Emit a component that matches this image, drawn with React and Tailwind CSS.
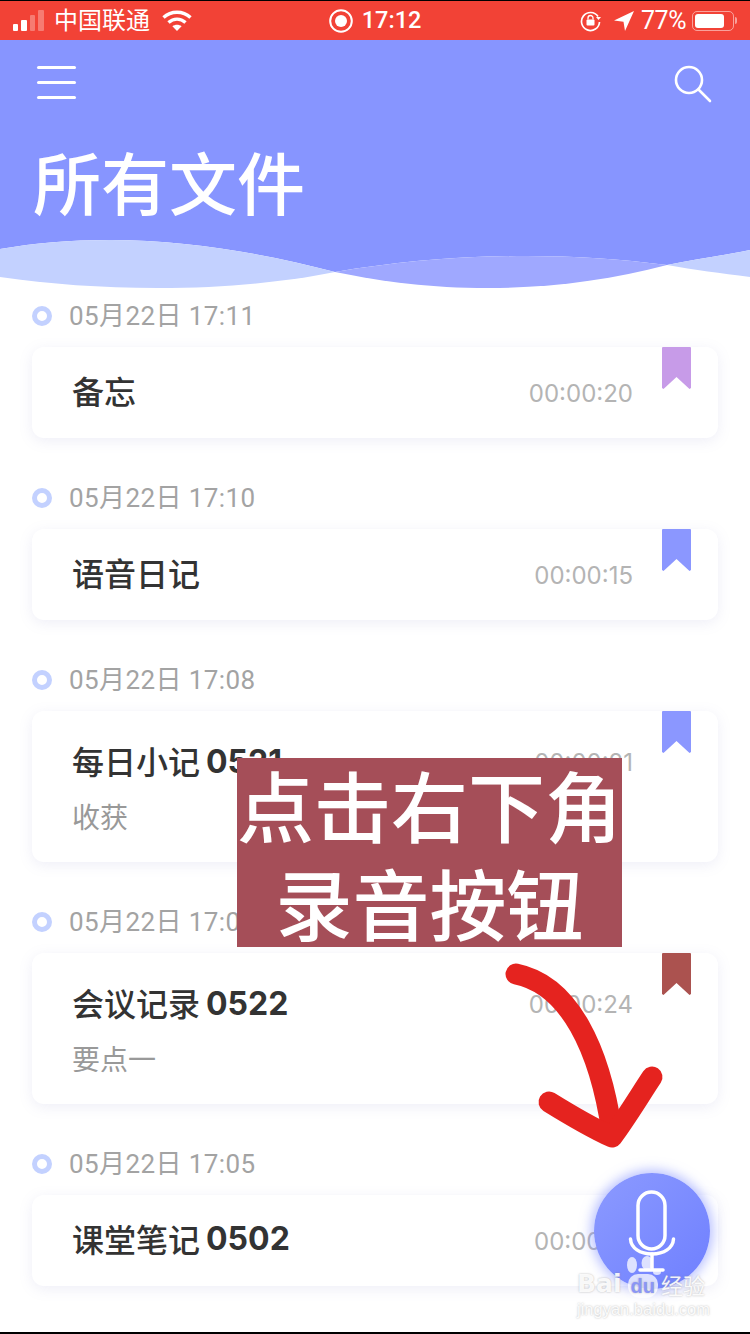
const files = [
  { date: '05月22日 17:11', title: '备忘', time: '00:00:20', mark: '#c79be8' },
  { date: '05月22日 17:10', title: '语音日记', time: '00:00:15', mark: '#8b97ff' },
  { date: '05月22日 17:08', title: '每日小记', num: '0521', note: '收获', time: '00:00:21', mark: '#8b97ff' },
  { date: '05月22日 17:06', title: '会议记录', num: '0522', note: '要点一', time: '00:00:24', mark: '#ab524f' },
  { date: '05月22日 17:05', title: '课堂笔记', num: '0502', time: '00:00:18', mark: '#8b97ff' },
]

function StatusBar() {
  return (
    <div className="flex h-[40px] items-center justify-between border-t border-black bg-[#f24236] pl-[13px] pr-[13px] text-white">
      <div className="flex items-center">
        <div className="mb-[2px] flex h-[22px] items-end gap-[3px]">
          <span className="h-[7px] w-[5px] rounded-[1px] bg-white" />
          <span className="h-[11px] w-[6px] rounded-[1px] bg-white" />
          <span className="h-[16px] w-[5px] rounded-[1px] bg-white/30" />
          <span className="h-[21px] w-[6px] rounded-[1px] bg-white/30" />
        </div>
        <span className="mb-[3px] ml-[10px] text-[24px] leading-none">中国联通</span>
        <svg className="ml-[12px]" width="30" height="22" viewBox="0 0 30 22" fill="none" stroke="white" strokeWidth="3.4">
          <path d="M1.5 7.5C9 .5 21 .5 28.5 7.5" />
          <path d="M6.5 12.5C11.5 8 18.5 8 23.5 12.5" />
          <path d="M15 21l-4.6-4.8c2.6-2 6.6-2 9.2 0z" fill="white" stroke="none" />
        </svg>
      </div>
      <div className="ml-[-22px] flex items-center gap-[9px]">
        <svg width="24" height="24" viewBox="0 0 24 24" fill="none">
          <circle cx="12" cy="12" r="10.8" stroke="white" strokeWidth="2" />
          <circle cx="12" cy="12" r="6" fill="white" />
        </svg>
        <span className="font-['Roboto',sans-serif] text-[23.5px] font-medium leading-none">17:12</span>
      </div>
      <div className="flex items-center">
        <svg width="22" height="22" viewBox="0 0 22 22" fill="none">
          <path d="M18 6.5A9 9 0 1 0 19.5 12" stroke="white" strokeWidth="1.7" />
          <path d="M16 7h5l-2.5 3z" fill="white" />
          <rect x="6.5" y="9.5" width="8" height="6" rx="1" fill="white" />
          <path d="M8 9.5V8a2.5 2.5 0 0 1 5 0v1.500" stroke="white" strokeWidth="1.300" />
        </svg>
        <svg className="ml-[12px]" width="20" height="20" viewBox="0 0 20 20">
          <path d="M20 0L0 9.500l9.500 1.200L11 20z" fill="white" />
        </svg>
        <span className="ml-[7px] font-['Roboto',sans-serif] text-[25px] leading-none tracking-[-0.5px]">77%</span>
        <div className="ml-[6px] flex items-center">
          <div className="h-[20px] w-[42px] rounded-[5px] border border-white/50 p-[2px]">
            <div className="h-full w-[29px] rounded-[3px] bg-white" />
          </div>
          <span className="ml-[1px] h-[7px] w-[2px] rounded-r-sm bg-white/50" />
        </div>
      </div>
    </div>
  )
}

function Header() {
  return (
    <div className="h-[200px] bg-[#8795ff] text-white">
      <div className="flex items-start justify-between pl-[37px] pr-[38px] pt-[25px]">
        <div className="flex w-[39px] flex-col gap-[12px] pt-[1px]">
          <span className="h-[3px] rounded-full bg-white" />
          <span className="h-[3px] rounded-full bg-white" />
          <span className="h-[3px] rounded-full bg-white" />
        </div>
        <svg width="38" height="38" viewBox="0 0 38 38" fill="none" stroke="white" strokeWidth="2.600" strokeLinecap="round">
          <circle cx="15" cy="15" r="13" />
          <path d="M24.500 24.500L36 36" />
        </svg>
      </div>
      <h1 className="ml-[33px] mt-[38px] text-[68px] font-medium leading-[80px]">所有文件</h1>
    </div>
  )
}

function Wave() {
  return (
    <svg className="block h-[50px] w-full" viewBox="0 240 750 50">
      <path d="M0 240H750V250C720 256 695 259 667 265C620 259 575 256 526 256C455 256 395 262 335 272C270 255 190 240 110 240C70 240 35 243 0 249Z" fill="#8795ff" />
      <path d="M0 249C35 243 70 240 110 240C190 240 270 255 335 272C285 282 225 288 158 288C100 288 50 284 0 277Z" fill="#c3d1ff" />
      <path d="M335 272C395 262 455 256 526 256C575 256 620 259 667 265C610 280 550 288 488 288C430 288 385 282 335 272Z" fill="#9fa8ff" />
      <path d="M667 265C695 259 720 256 750 250V277C720 273 695 270 667 265Z" fill="#c3d1ff" />
    </svg>
  )
}

function FileCard({ file }) {
  const hasNote = !!file.note
  return (
    <div className="mb-[45px]">
      <div className="flex h-[30px] items-center">
        <span className="h-[20px] w-[20px] rounded-full border-[5px] border-[#c3d1ff]" />
        <span className="ml-[17px] font-['Roboto','Noto_Sans_CJK_SC',sans-serif] text-[26px] leading-none tracking-[0.4px] text-[#a3a3a3]">{file.date}</span>
      </div>
      <div className={`relative mt-[16px] rounded-[12px] bg-white pl-[40px] pr-[85px] shadow-[0_3px_14px_rgba(120,120,190,0.13)] ${hasNote ? 'h-[151px]' : 'h-[91px]'}`}>
        <div className={`flex items-center justify-between ${hasNote ? 'h-[100px]' : 'h-[90px]'}`}>
          <span className={`flex items-center text-[32px] font-medium leading-none text-[#333333] ${hasNote ? 'pb-[2px]' : 'pb-[5px]'}`}>
            {file.title}
            {file.num && <span className="ml-[6px] mt-[3px] font-['Inter',sans-serif] text-[32px] font-bold">{file.num}</span>}
          </span>
          <span className="font-['Inter',sans-serif] pt-[4px] text-[24px] leading-none text-[#b4b4b4]">{file.time}</span>
        </div>
        {hasNote && <div className="-mt-[9px] text-[28px] leading-none text-[#999999]">{file.note}</div>}
        <svg className="absolute right-[27px] top-0" width="29" height="42" viewBox="0 0 29 42">
          <path d="M1 0H28a1 1 0 0 1 1 1V41L27.500 42L14.500 30L1.500 42L0 41V1A1 1 0 0 1 1 0Z" fill={file.mark} />
        </svg>
      </div>
    </div>
  )
}

function Overlay() {
  return (
    <>
      <div className="absolute left-[237px] top-[758px] h-[189px] w-[385px] overflow-hidden bg-[#a54e58] text-white">
        <div className="-mt-[3px] whitespace-nowrap text-center text-[77px] font-medium leading-[98px]">
          <div>点击右下角</div>
          <div>录音按钮</div>
        </div>
      </div>
      <svg className="absolute left-[500px] top-[955px]" width="180" height="200" viewBox="500 955 180 200" fill="none" stroke="#e5231f" strokeWidth="21" strokeLinecap="round" strokeLinejoin="round">
        <path d="M516 974C570 985 600 1050 612 1132" />
        <path d="M549 1102C570 1115 590 1127 612 1137C625 1120 640 1095 652 1077" />
      </svg>
    </>
  )
}

function MicButton() {
  return (
    <div className="absolute left-[594px] top-[1173px] h-[116px] w-[116px] rounded-full bg-gradient-to-br from-[#8c9aff] to-[#6f7fff] shadow-[0_0_12px_3px_rgba(125,140,255,0.55)]">
      <svg className="absolute left-0 top-0" width="116" height="116" viewBox="594 1173 116 116" fill="none" stroke="white" strokeWidth="3.500" strokeLinecap="round">
        <rect x="638" y="1192" width="27" height="57" rx="13.500" />
        <path d="M630.500 1239C631 1248 640 1254 652 1254C664 1254 673 1248 673.500 1239" />
        <path d="M652 1254V1270M640 1270H663" />
      </svg>
    </div>
  )
}

function Watermark() {
  const outline = '[text-shadow:0_0_2px_rgba(130,130,130,0.6)]'
  return (
    <div className="absolute left-[577px] top-[1253px] w-[140px] text-white/90">
      <svg className="absolute left-[45px] top-0" width="44" height="30" viewBox="0 0 44 30" fill="white" fillOpacity="0.75">
        <ellipse cx="10" cy="12" rx="5" ry="8" />
        <ellipse cx="25" cy="10" rx="5.500" ry="7" />
        <ellipse cx="35" cy="19" rx="4" ry="3" />
      </svg>
      <div className={`flex items-end pt-[17px] font-['DejaVu_Sans',sans-serif] ${outline}`}>
        <span className="text-[25px] font-bold leading-[28px]">Bai</span>
        <span className="ml-[6px] rounded-t-[10px] rounded-b-[12px] bg-white/75 px-[3px] font-['Liberation_Sans',sans-serif] text-[20px] font-bold leading-[24px] text-[#8b96f5]">du</span>
        <span className="ml-[3px] font-['Noto_Sans_CJK_SC',sans-serif] text-[22px] leading-[28px]">经验</span>
      </div>
      <div className={`mt-[2px] font-['Liberation_Sans',sans-serif] text-[16.500px] leading-[18px] ${outline}`}>jingyan.baidu.com</div>
    </div>
  )
}

export default function App() {
  return (
    <div className="relative h-[1334px] w-[750px] overflow-hidden bg-white font-['Noto_Sans_CJK_SC',sans-serif]">
      <StatusBar />
      <Header />
      <Wave />
      <div className="px-[32px] pt-[11px]">
        {files.map(file => (
          <FileCard key={file.date} file={file} />
        ))}
      </div>
      <Overlay />
      <MicButton />
      <Watermark />
      <div className="absolute inset-x-0 bottom-0 h-[2px] bg-black" />
    </div>
  )
}
